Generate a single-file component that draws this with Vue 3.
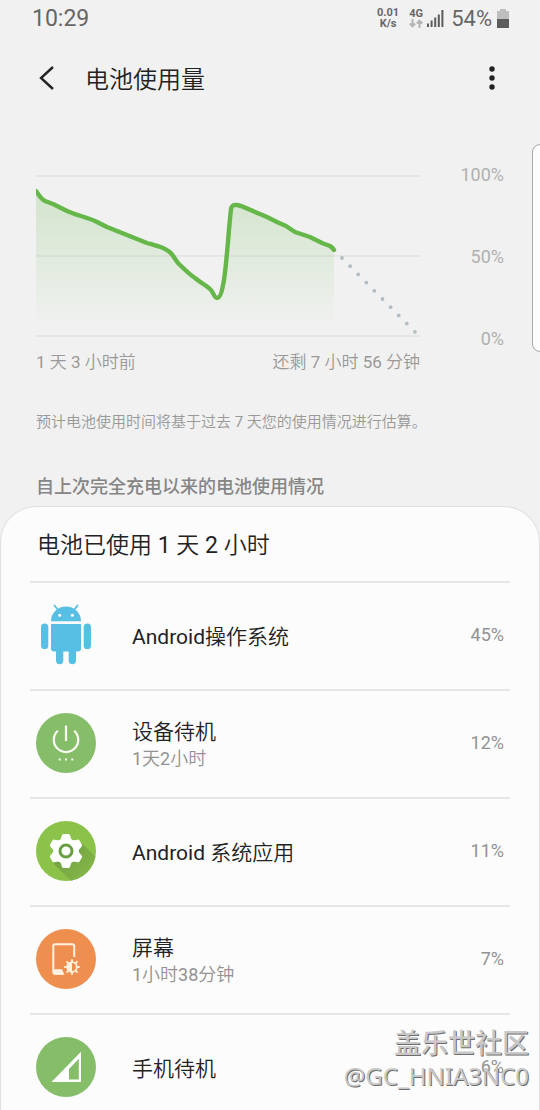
<script setup>
const apps = [
  { icon: 'android', name: 'Android操作系统', time: '', percent: '45%' },
  { icon: 'power', name: '设备待机', time: '1天2小时', percent: '12%' },
  { icon: 'gear', name: 'Android 系统应用', time: '', percent: '11%' },
  { icon: 'screen', name: '屏幕', time: '1小时38分钟', percent: '7%' },
  { icon: 'signal', name: '手机待机', time: '', percent: '6%' },
]

const forecast = Array.from({ length: 10 }, (_, i) => ({
  x: 306 + i * 8.1,
  y: 82 + i * 8.2,
}))

const teeth = [0, 60, 120, 180, 240, 300]
const rays = [0, 45, 90, 135, 180, 225, 270, 315]
</script>

<template>
  <div class="page">
    <header class="status">
      <span class="clock">10:29</span>
      <div class="indicators">
        <span class="speed"><span>0.01</span><span>K/s</span></span>
        <span class="network">
          <span>4G</span>
          <svg width="14" height="9" viewBox="0 0 14 9" fill="none" stroke="#b4b4b4" stroke-width="2">
            <path d="M3.5 0V7M.8 4.5L3.5 7.3L6.2 4.5M10.5 9V2M7.8 4.5L10.5 1.7L13.2 4.5" />
          </svg>
        </span>
        <svg class="bars" width="17" height="17" viewBox="0 0 17 17" fill="#5c5c5c">
          <path d="M0 13.5H2V17H0zM3.6 10.5H5.6V17H3.6zM7.2 7.5H9.2V17H7.2zM10.8 4.5H12.8V17H10.8zM14.4 0H16.4V17H14.4z" />
        </svg>
        <span class="level">54%</span>
        <svg class="battery" width="12" height="19" viewBox="0 0 12 19">
          <path d="M3 0H9V2H12V10H0V2H3z" fill="#bdbdbd" />
          <path d="M0 10H12V19H0z" fill="#5c5c5c" />
        </svg>
      </div>
    </header>

    <nav class="toolbar">
      <button class="icon-button" type="button" aria-label="返回">
        <svg width="16" height="26" viewBox="0 0 16 26" fill="none" stroke="#222" stroke-width="2.4">
          <path d="M14 2L2 13L14 24" />
        </svg>
      </button>
      <h1>电池使用量</h1>
      <button class="icon-button" type="button" aria-label="更多选项">
        <svg width="16" height="26" viewBox="0 0 16 26" fill="#222">
          <circle cx="8" cy="4" r="2.7" /><circle cx="8" cy="13" r="2.7" /><circle cx="8" cy="22" r="2.7" />
        </svg>
      </button>
    </nav>

    <section class="chart">
      <div class="plot">
        <svg viewBox="0 -1 384 162">
          <defs>
            <linearGradient id="fill" x1="0" y1="15" x2="0" y2="154" gradientUnits="userSpaceOnUse">
              <stop offset="0" stop-color="#64b748" stop-opacity=".22" />
              <stop offset="1" stop-color="#64b748" stop-opacity="0" />
            </linearGradient>
          </defs>
          <path d="M0 0H384M0 80H384M0 160H384" stroke="#e2e2e2" stroke-width="1.4" />
          <path
            fill="url(#fill)"
            d="M0 15C3 19 5 23 9 25L17 28L31 35C40 39 50 41 59 45L71 51L81 55L91 59L111 67C118 69 122 70 127 72C136 76 136 79 142 87C147 92 153 98 159 102C165 107 171 110 174 113C177 115 178 122 181 122C184 122 186 115 187 109C190 98 192 60 195 33C196 28 199 29 201 29C208 30 215 35 224 38L231 41L241 46L250 50L259 56L274 61L286 67L294 70Q296 71 298 74V160H0z"
          />
          <path
            fill="none" stroke="#64b748" stroke-width="4.4" stroke-linecap="round" stroke-linejoin="round"
            d="M0 15C3 19 5 23 9 25L17 28L31 35C40 39 50 41 59 45L71 51L81 55L91 59L111 67C118 69 122 70 127 72C136 76 136 79 142 87C147 92 153 98 159 102C165 107 171 110 174 113C177 115 178 122 181 122C184 122 186 115 187 109C190 98 192 60 195 33C196 28 199 29 201 29C208 30 215 35 224 38L231 41L241 46L250 50L259 56L274 61L286 67L294 70Q296 71 298 74"
          />
          <circle v-for="dot in forecast" :key="dot.x" :cx="dot.x" :cy="dot.y" r="1.9" fill="#b3bcc1" />
        </svg>
        <div class="range">
          <span>1 天 3 小时前</span>
          <span>还剩 7 小时 56 分钟</span>
        </div>
      </div>
      <div class="axis"><span>100%</span><span>50%</span><span>0%</span></div>
    </section>

    <p class="note">预计电池使用时间将基于过去 7 天您的使用情况进行估算。</p>
    <h2 class="heading">自上次完全充电以来的电池使用情况</h2>

    <main class="card">
      <h3>电池已使用 1 天 2 小时</h3>
      <ul>
        <li v-for="app in apps" :key="app.name">
          <svg class="app-icon" viewBox="0 0 60 60" aria-hidden="true">
            <g v-if="app.icon === 'android'" fill="#57bfe3">
              <path d="M15 16.3A15 14.8 0 0 1 45 16.3z" />
              <path d="M18.5 .5L22 5M41.5 .5L38 5" stroke="#57bfe3" stroke-width="1.8" stroke-linecap="round" />
              <path d="M15 19H45V43.5Q45 46.5 42 46.5H40V55.5A3.6 3.6 0 0 1 32.7 55.5V46.5H27.3V55.5A3.6 3.6 0 0 1 20 55.5V46.5H18Q15 46.5 15 43.5z" />
              <rect x="5" y="18.5" width="7.3" height="25.5" rx="3.6" />
              <rect x="47.7" y="18.5" width="7.3" height="25.5" rx="3.6" />
              <circle cx="23.7" cy="10.3" r="1.5" fill="#fff" /><circle cx="36.3" cy="10.3" r="1.5" fill="#fff" />
            </g>
            <g v-else-if="app.icon === 'power'">
              <circle cx="30" cy="30" r="30" fill="#86bd68" />
              <path d="M21.8 17.8A12.2 12.2 0 1 0 38.2 17.8M30 12.5V28" fill="none" stroke="#fbfdf4" stroke-width="2.2" />
              <path d="M22.7 45.5h2v2h-2zM29 45.5h2v2h-2zM35.3 45.5h2v2h-2z" fill="#fbfdf4" />
            </g>
            <g v-else-if="app.icon === 'gear'">
              <clipPath id="disc"><circle cx="30" cy="30" r="30" /></clipPath>
              <linearGradient id="shade" x1="30" y1="30" x2="54" y2="54" gradientUnits="userSpaceOnUse">
                <stop offset="0" stop-color="#74a342" />
                <stop offset="1" stop-color="#84b74a" />
              </linearGradient>
              <circle cx="30" cy="30" r="30" fill="#8bc34a" />
              <path d="M45.5 22L66 42V66H41L17 42z" fill="url(#shade)" clip-path="url(#disc)" />
              <circle cx="30" cy="30" r="12.8" fill="#fff" />
              <path
                v-for="angle in teeth" :key="angle" :transform="`rotate(${angle} 30 30)`" fill="#fff"
                d="M24 20L26 14.2Q26.4 13 27.6 13H32.4Q33.6 13 34 14.2L36 20z"
              />
              <circle cx="30" cy="30" r="6" fill="#fff" stroke="#689f43" stroke-width="3" />
            </g>
            <g v-else-if="app.icon === 'screen'">
              <circle cx="30" cy="30" r="30" fill="#ee8f50" />
              <path d="M27 44.7H19Q17.3 44.7 17.3 43V17Q17.3 15.2 19 15.2H36.3Q38.2 15.2 38.2 17V28" fill="none" stroke="#fdf1df" stroke-width="2" />
              <path d="M17 40.3H26L28.5 45.7H18z" fill="#fdf1df" />
              <circle cx="36" cy="38" r="4.8" fill="none" stroke="#fdf1df" stroke-width="1.8" />
              <path d="M36 33.5A4.5 4.5 0 0 0 36 42.5z" fill="#fdf1df" />
              <path
                v-for="angle in rays" :key="angle" :transform="`rotate(${angle} 36 38)`"
                d="M36 33V30.2" stroke="#fdf1df" stroke-width="1.8"
              />
            </g>
            <g v-else>
              <circle cx="30" cy="30" r="30" fill="#86bd68" />
              <path fill="#fff" fill-rule="evenodd" d="M15.5 45L45 14.7V45zM33 32V42.5H42.8V21.8z" />
            </g>
          </svg>
          <div class="label">
            <span class="name">{{ app.name }}</span>
            <span v-if="app.time" class="time">{{ app.time }}</span>
          </div>
          <span class="percent">{{ app.percent }}</span>
        </li>
      </ul>
    </main>

    <div class="edge-handle"></div>
    <div class="watermark"><span class="site">盖乐世社区</span><span class="user">@GC_HNIA3NC0</span></div>
  </div>
</template>

<style>
body {
  margin: 0;
  background: #f1f1f1;
}
</style>

<style scoped>
.page {
  position: relative;
  display: flex;
  flex-direction: column;
  height: 100vh;
  overflow: hidden;
  background: #f1f1f1;
  color: #222;
  font-family: Roboto, "Noto Sans CJK SC DemiLight", "Noto Sans CJK SC", sans-serif;
  font-weight: 400;
}

h1, h2, h3, p, ul {
  margin: 0;
  padding: 0;
  font-weight: inherit;
}

.status {
  display: flex;
  align-items: center;
  justify-content: space-between;
  height: 36px;
  padding: 0 31px 0 32px;
  color: #666;
}

.clock {
  font-size: 23px;
}

.indicators {
  display: flex;
  align-items: center;
}

.speed, .network {
  display: flex;
  flex-direction: column;
  align-items: center;
  font-size: 11px;
  font-weight: 700;
  line-height: 11px;
}

.network {
  margin-left: 10px;
}

.bars {
  margin-left: 4px;
}

.level {
  margin-left: 7px;
  font-size: 22px;
}

.battery {
  margin-left: 5px;
}

.toolbar {
  display: flex;
  align-items: center;
  height: 84px;
  padding: 0 40px 0 39px;
}

.toolbar h1 {
  flex: 1;
  margin-left: 30px;
  padding-top: 4px;
  font-size: 24px;
  line-height: 36px;
}

.icon-button {
  display: flex;
  padding: 0;
  border: 0;
  background: none;
}

.chart {
  display: flex;
  padding: 55px 36px 0;
}

.plot {
  flex: 1;
}

.plot svg {
  display: block;
  width: 100%;
}

.range {
  display: flex;
  justify-content: space-between;
  margin-top: 13px;
  color: #999;
  font-size: 17px;
  line-height: 25px;
}

.axis {
  display: flex;
  flex-direction: column;
  align-items: flex-end;
  justify-content: space-between;
  width: 84px;
  height: 186px;
  margin-top: -11px;
  color: #b0b0b0;
  font-size: 18px;
  line-height: 22px;
}

.note {
  padding: 35px 36px 0;
  color: #999;
  font-size: 15px;
  line-height: 24px;
}

.heading {
  padding: 40px 36px 0;
  color: #858585;
  font-family: Roboto, "Noto Sans CJK SC", sans-serif;
  font-size: 18px;
  font-weight: 500;
  line-height: 26px;
}

.card {
  flex: 1;
  min-height: 0;
  margin-top: 6px;
  padding: 0 29px;
  border: 1px solid #e0e0e0;
  border-bottom: 0;
  border-radius: 36px 36px 0 0;
  background: #fcfcfc;
}

.card h3 {
  padding: 4px 7px 0;
  font-size: 23px;
  line-height: 70px;
}

li {
  display: flex;
  align-items: center;
  box-sizing: border-box;
  height: 108px;
  padding: 0 6px 2px;
  border-top: 2px solid #e6e6e6;
}

.app-icon {
  width: 60px;
  height: 60px;
  overflow: visible;
}

.label {
  display: flex;
  flex: 1;
  flex-direction: column;
  margin-left: 36px;
  padding-top: 3px;
}

.name {
  font-size: 21px;
  line-height: 28px;
}

.time {
  color: #929292;
  font-size: 18px;
  line-height: 26px;
}

.percent {
  color: #929292;
  font-size: 18px;
  line-height: 20px;
}

.edge-handle {
  position: absolute;
  top: 144px;
  right: -8px;
  width: 14px;
  height: 206px;
  border: 1px solid #a9a9a9;
  border-radius: 8px;
  background: #fcfcfc;
}

.watermark {
  position: absolute;
  right: 11px;
  bottom: 18px;
  display: flex;
  flex-direction: column;
  align-items: flex-end;
  color: #c8c8c8;
  text-shadow: 1px 1px 0 #6c6c6c;
}

.site {
  font-family: "Noto Sans CJK SC", sans-serif;
  font-size: 27px;
  font-weight: 500;
  line-height: 36px;
}

.user {
  font-family: "Noto Sans", sans-serif;
  font-size: 24px;
  line-height: 32px;
}
</style>
